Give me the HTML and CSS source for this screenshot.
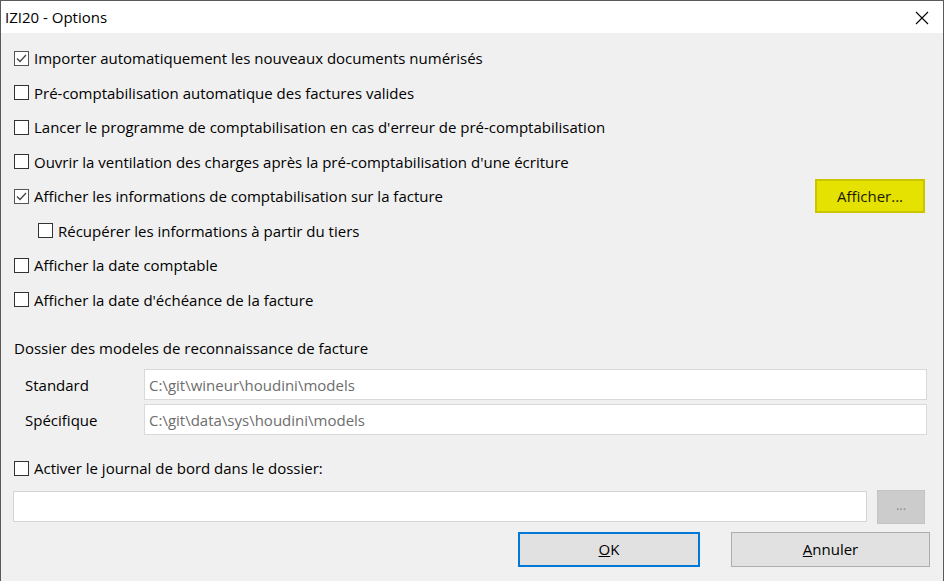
FILE: index.html
```html
<!DOCTYPE html>
<html lang="fr">
<head>
<meta charset="utf-8">
<title>IZI20 - Options</title>
<link rel="stylesheet" href="styles.css">
</head>
<body>
<div class="window">
  <div class="titlebar">
    <span class="title">IZI20 - Options</span>
    <svg class="close" width="14" height="14" viewBox="0 0 14 14"><path d="M1 1L13 13M13 1L1 13" stroke="#000" stroke-width="1.1" fill="none"/></svg>
  </div>
  <div class="content">
    <div class="row"><span class="cb checked"><svg width="13" height="13" viewBox="0 0 13 13"><path d="M2 6.5L5 9.5L11 3" stroke="#444" stroke-width="1.3" fill="none"/></svg></span><span class="lbl">Importer automatiquement les nouveaux documents numérisés</span></div>
    <div class="row"><span class="cb"></span><span class="lbl">Pré-comptabilisation automatique des factures valides</span></div>
    <div class="row"><span class="cb"></span><span class="lbl">Lancer le programme de comptabilisation en cas d'erreur de pré-comptabilisation</span></div>
    <div class="row"><span class="cb"></span><span class="lbl">Ouvrir la ventilation des charges après la pré-comptabilisation d'une écriture</span></div>
    <div class="row"><span class="cb checked"><svg width="13" height="13" viewBox="0 0 13 13"><path d="M2 6.5L5 9.5L11 3" stroke="#444" stroke-width="1.3" fill="none"/></svg></span><span class="lbl">Afficher les informations de comptabilisation sur la facture</span><button class="btn-show">Afficher...</button></div>
    <div class="row sub"><span class="cb"></span><span class="lbl">Récupérer les informations à partir du tiers</span></div>
    <div class="row"><span class="cb"></span><span class="lbl">Afficher la date comptable</span></div>
    <div class="row"><span class="cb"></span><span class="lbl">Afficher la date d'échéance de la facture</span></div>

    <div class="group-title">Dossier des modeles de reconnaissance de facture</div>
    <div class="field-row"><span class="field-lbl">Standard</span><div class="input disabled">C:\git\wineur\houdini\models</div></div>
    <div class="field-row second"><span class="field-lbl">Spécifique</span><div class="input disabled">C:\git\data\sys\houdini\models</div></div>

    <div class="row journal"><span class="cb"></span><span class="lbl">Activer le journal de bord dans le dossier:</span></div>
    <div class="path-row"><div class="input path"></div><button class="btn-browse">...</button></div>
    <div class="actions">
      <button class="btn btn-ok"><u>O</u>K</button>
      <button class="btn btn-cancel"><u>A</u>nnuler</button>
    </div>
  </div>
</div>
</body>
</html>
```
FILE: styles.css
```css
* { box-sizing: border-box; }
html, body { margin: 0; padding: 0; }
body {
  width: 944px;
  height: 581px;
  overflow: hidden;
  font-family: "Open Sans", "Noto Sans", sans-serif;
  font-size: 15px;
  color: #000;
  background: #f0f0f0;
}
.window {
  width: 944px;
  height: 581px;
  border-left: 1px solid #5a5a5a;
  border-right: 1px solid #5a5a5a;
  border-top: 1px solid #5a5a5a;
  background: #f0f0f0;
  display: flex;
  flex-direction: column;
}
.titlebar {
  height: 32px;
  background: #fff;
  display: flex;
  align-items: center;
  justify-content: space-between;
  padding: 0 14px 0 4px;
  flex-shrink: 0;
}
.title { font-size: 15px; }
.close { margin-top: 1px; }
.content {
  padding: 8px 0 0 13px;
  display: flex;
  flex-direction: column;
}
.row {
  height: 34.5px;
  display: flex;
  align-items: center;
}
.row.sub { padding-left: 24px; }
.cb {
  width: 15px;
  height: 15px;
  border: 1px solid #333;
  background: #fff;
  display: inline-flex;
  align-items: center;
  justify-content: center;
  flex-shrink: 0;
}
.cb.checked { border-color: #555; }
.lbl { margin-left: 5px; white-space: nowrap; }
.btn-show {
  margin-left: auto;
  margin-right: 18px;
  width: 110px;
  height: 34px;
  background: #e5e100;
  border: 2px solid #c9c600;
  font-family: inherit;
  font-size: 15px;
  color: #1a1a00;
  padding: 0;
}
.group-title {
  margin-top: 21px;
  height: 20px;
  line-height: 20px;
}
.field-row {
  display: flex;
  align-items: center;
  margin-top: 11px;
  height: 31px;
}
.field-row.second { margin-top: 4px; }
.field-lbl { width: 130px; padding-left: 11px; }
.input {
  height: 31px;
  background: #fff;
  border: 1px solid #d9d9d9;
  display: flex;
  align-items: center;
  padding-left: 4px;
  color: #6d6d6d;
}
.input.disabled { width: 783px; }
.row.journal { margin-top: 16px; }
.path-row {
  display: flex;
  align-items: center;
  margin-top: 4px;
  margin-left: -1px;
  height: 34px;
}
.input.path { width: 854px; height: 31px; border-color: #d4d4d4; }
.btn-browse {
  margin-left: 10px;
  width: 48px;
  height: 34px;
  background: #cccccc;
  border: 1px solid #c4c4c4;
  color: #8a8a8a;
  font-family: inherit;
  font-size: 13px;
  padding: 0 0 4px 0;
}
.actions {
  display: flex;
  margin-top: 8px;
  padding-left: 504px;
  gap: 31px;
}
.btn {
  height: 35px;
  background: #e1e1e1;
  font-family: inherit;
  font-size: 15px;
  color: #000;
  padding: 0;
}
.btn-ok { width: 182px; border: 2px solid #0078d7; }
.btn-cancel { width: 199px; border: 1px solid #adadad; }
```
